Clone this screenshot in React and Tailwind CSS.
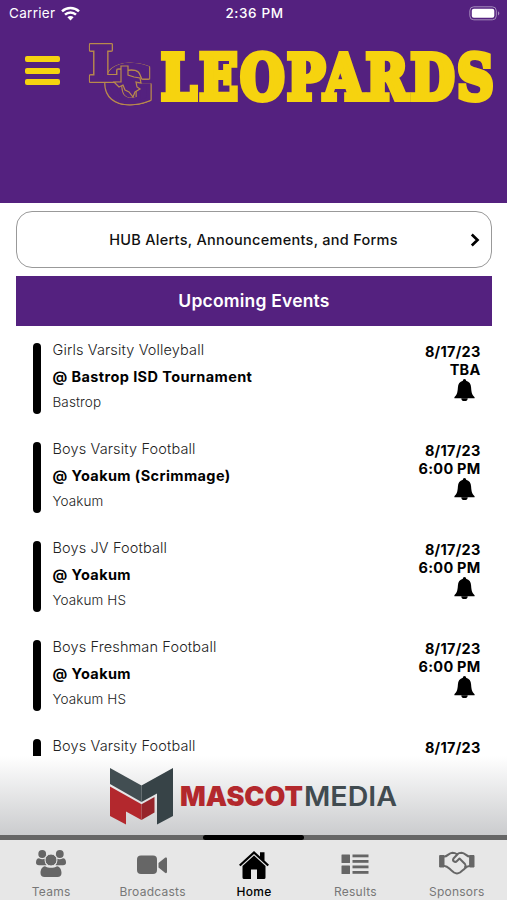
import React from 'react';

const events = [
  { id: 1, sport: 'Girls Varsity Volleyball', title: '@ Bastrop ISD Tournament', place: 'Bastrop', date: '8/17/23', time: 'TBA' },
  { id: 2, sport: 'Boys Varsity Football', title: '@ Yoakum (Scrimmage)', place: 'Yoakum', date: '8/17/23', time: '6:00 PM' },
  { id: 3, sport: 'Boys JV Football', title: '@ Yoakum', place: 'Yoakum HS', date: '8/17/23', time: '6:00 PM' },
  { id: 4, sport: 'Boys Freshman Football', title: '@ Yoakum', place: 'Yoakum HS', date: '8/17/23', time: '6:00 PM' },
  { id: 5, sport: 'Boys Varsity Football', date: '8/17/23' },
];

function StatusBar() {
  return (
    <div className="grid h-7 grid-cols-3 items-center pl-[9px] pr-[7px] text-[13.5px] leading-none text-white">
      <div className="flex items-center gap-[6px]">
        <span className="tracking-[0.3px]">Carrier</span>
        <svg className="-mt-[2px]" width="19" height="15" viewBox="0 0 19 15" fill="none" stroke="white" strokeWidth="2.5">
          <path d="M1 5.3c4.8-4.5 12.2-4.5 17 0" />
          <path d="M4 8.6c3.1-2.9 7.9-2.9 11 0" />
          <path d="M9.5 14.4l-3.1-3.2c1.8-1.6 4.4-1.6 6.2 0z" fill="white" stroke="none" />
        </svg>
      </div>
      <div className="whitespace-nowrap text-center font-medium tracking-[0.6px]">2:36 PM</div>
      <svg className="-mt-px justify-self-end" width="31" height="15" viewBox="0 0 31 15">
        <rect x="0.8" y="0.8" width="26.5" height="13" rx="4" fill="none" stroke="#a58dbc" strokeWidth="1" />
        <rect x="2.8" y="2.8" width="22.5" height="9" rx="2" fill="white" />
        <path d="M29 5.2c1.8.8 1.8 3.4 0 4.2z" fill="#a58dbc" />
      </svg>
    </div>
  );
}

function TeamLogo() {
  return (
    <svg className="ml-[27px] shrink-0 overflow-visible" width="406" height="70" viewBox="87 38 406 70">
      <g fontFamily="'DejaVu Serif'" fontWeight="bold" fill="#54217f" stroke="#54217f" strokeWidth="3.5">
        <g className="[filter:drop-shadow(1px_0_0_#b98a4c)_drop-shadow(-1px_0_0_#b98a4c)_drop-shadow(0_1px_0_#b98a4c)]">
          <text x="105" y="101.500" fontSize="50" textLength="48" lengthAdjust="spacingAndGlyphs">G</text>
        </g>
        <g className="[filter:drop-shadow(1px_0_0_#b98a4c)_drop-shadow(-1px_0_0_#b98a4c)_drop-shadow(0_1px_0_#b98a4c)_drop-shadow(0_-1px_0_#b98a4c)]">
          <text x="89.500" y="79.500" fontSize="47" textLength="34" lengthAdjust="spacingAndGlyphs">L</text>
        </g>
      </g>
      <path
        d="M121 66h7v9l6 2 6 1 1 5-5-1 1 5 3 2-5 3-2 5-4-5-4-2-2-5-4 2-5-5h7z"
        fill="#54217f"
        stroke="#b98a4c"
        strokeWidth="1.2"
      />
      <text
        x="161"
        y="99.200"
        textLength="335"
        lengthAdjust="spacingAndGlyphs"
        letterSpacing="3"
        fontFamily="'DejaVu Serif'"
        fontWeight="bold"
        fontSize="62"
        fill="#f6d30f"
        stroke="#f6d30f"
        strokeWidth="6"
      >
        LEOPARDS
      </text>
    </svg>
  );
}

function BellIcon() {
  return (
    <svg className="mr-[6px]" width="21" height="23" viewBox="0 0 21 23">
      <path d="M10.5 0c1 0 1.6.7 1.6 1.8 3.2.8 4.8 3.2 5 6.7.3 5.200 1 7.300 3.500 9.700v1H.4v-1c2.500-2.400 3.200-4.500 3.500-9.700.2-3.500 1.800-5.900 5-6.700C8.900.7 9.500 0 10.500 0z" />
      <path d="M7.300 19.200h6.400a3.200 2.900 0 0 1-6.400 0z" />
    </svg>
  );
}

function EventRow({ event }) {
  return (
    <div className="mb-7 flex h-[71px] shrink-0 pl-[16.5px] pr-[10.5px]">
      <div className="h-full w-2 rounded-full bg-black" />
      <div className="ml-[12px] flex-1 text-[#222]">
        <div className="-mt-[6px] text-[14.5px] font-light leading-[26px] tracking-[0.13px]">{event.sport}</div>
        <div className="mt-px text-[14.5px] font-bold leading-[26px] tracking-[0.4px] text-black">{event.title}</div>
        <div className="-mt-px text-[13.5px] font-light leading-[26px] tracking-[0.1px]">{event.place}</div>
      </div>
      <div className="flex flex-col items-end text-[14.5px] font-bold leading-[18px] tracking-[0.25px] text-black">
        <div>{event.date}</div>
        <div>{event.time}</div>
        {event.time && <BellIcon />}
      </div>
    </div>
  );
}

function SponsorBanner() {
  return (
    <div className="flex h-[79px] shrink-0 items-start bg-linear-to-b from-white to-[#cbccce] pl-[109px] pt-[12px]">
      <svg width="65" height="59" viewBox="0 0 65 59">
        <path d="M1 0l31.500 17.500V34L1 16z" fill="#424e52" />
        <path d="M32.500 17.500L64 0v48l-16 8.500V25.500L32.500 34z" fill="#374347" />
        <path d="M1 18.500l31.500 17.800V52L17 43.500V56.500L1 48z" fill="#b3282d" />
        <path d="M32.500 36.300L45.500 29v15.500L32.500 52z" fill="#97242a" />
      </svg>
      <svg width="230" height="40" viewBox="0 0 230 40" className="mt-[7px]">
        <text x="6" y="30.500" textLength="123" lengthAdjust="spacingAndGlyphs" fontFamily="Inter" fontSize="27.500" fontWeight="900" fill="#b3282d">MASCOT</text>
        <text x="130" y="30.500" textLength="93" lengthAdjust="spacingAndGlyphs" fontFamily="Inter" fontSize="27.500" fontWeight="600" fill="#414b50">MEDIA</text>
      </svg>
    </div>
  );
}

function TeamsIcon() {
  return (
    <svg className="-mt-px" width="30" height="28" viewBox="0 0 30 28" fill="currentColor">
      <circle cx="6.200" cy="4" r="3.900" />
      <circle cx="23.800" cy="4" r="3.900" />
      <path d="M3 8.300c2 1.300 4.600 1.300 6.500.2-1 2.800-.6 4.800 1 6.800H3c-2 0-3-1-3-2.800 0-2.200 1-4.200 3-4.200zM27 8.300c-2 1.300-4.600 1.300-6.500.2 1 2.800.6 4.800-1 6.800H27c2 0 3-1 3-2.800 0-2.200-1-4.200-3-4.200z" />
      <circle cx="15" cy="10" r="6" stroke="#e7e7e7" strokeWidth="1" />
      <path d="M9 16.200c3.500 2.200 8.500 2.200 12 0 3 .5 4.500 3.500 4.500 6.800 0 2.500-1.500 4-4 4h-13c-2.500 0-4-1.500-4-4 0-3.300 1.500-6.300 4.500-6.800z" />
    </svg>
  );
}

function BroadcastsIcon() {
  return (
    <svg width="31" height="28" viewBox="0 0 31 28" fill="currentColor">
      <rect x="0" y="5.500" width="20" height="18.500" rx="4" />
      <path d="M21.500 13l6.500-5.200c1-.8 2-.3 2 1v13c0 1.300-1 1.700-2 1l-6.500-5.300z" />
    </svg>
  );
}

function HomeIcon() {
  return (
    <svg className="mt-[2px]" width="30" height="28" viewBox="0 0 30 28" fill="currentColor">
      <path d="M15 0l6 5.500V1.200h4.500v8.300L30 13.800l-1.500 1.500L15 2.900 1.500 15.300 0 13.800z" />
      <path d="M15 4.500l11.500 10.600V26.500a1.500 1.500 0 0 1-1.500 1.500h-7v-9.500h-6V28H5a1.500 1.500 0 0 1-1.500-1.500V15.100z" />
    </svg>
  );
}

function ResultsIcon() {
  return (
    <svg width="28" height="28" viewBox="0 0 28 28" fill="currentColor">
      <rect x="0.500" y="4.500" width="8.500" height="8.500" rx="0.500" />
      <rect x="11.500" y="4.500" width="16" height="2.800" />
      <rect x="11.500" y="10" width="16" height="2.800" />
      <rect x="0.500" y="15.500" width="8.500" height="8.500" rx="0.500" />
      <rect x="11.500" y="15.500" width="16" height="2.800" />
      <rect x="11.500" y="21" width="16" height="2.800" />
    </svg>
  );
}

function SponsorsIcon() {
  return (
    <svg width="36" height="28" viewBox="0 0 36 28" fill="none" stroke="currentColor" strokeWidth="2" strokeLinejoin="round" strokeLinecap="round">
      <path d="M1 5.500h4v11.500H1zM31 5.500h4v11.500h-4z" fill="currentColor" strokeWidth="1" />
      <path d="M5.500 6.500c3 0 4-3.500 8-3.700 2 0 3.500.7 4.500 1.400 1-.7 2.500-1.400 4.500-1.400 4 .2 5 3.700 8 3.700" />
      <path d="M5.500 16c3 0 4.500 2.500 7 4.500l2.500 2c2 1.300 4 1.300 6 0l3-2.500c2.500-2 3.500-4 6.500-4" />
      <path d="M18.500 4.200l-4 4.300c-1.500 2.500 1.500 4.500 3.500 2.500l2.500-2.500 5.500 5.500c.8 1 .8 2 0 3" />
    </svg>
  );
}

const tabs = [
  { name: 'Teams', icon: <TeamsIcon /> },
  { name: 'Broadcasts', icon: <BroadcastsIcon /> },
  { name: 'Home', icon: <HomeIcon />, active: true },
  { name: 'Results', icon: <ResultsIcon /> },
  { name: 'Sponsors', icon: <SponsorsIcon /> },
];

function TabBar() {
  return (
    <div className="grid h-[65px] shrink-0 grid-cols-5 bg-[#e7e7e7]">
      {tabs.map((tab) => (
        <div key={tab.name} className={`flex flex-col items-center ${tab.active ? 'text-black' : 'text-[#666]'}`}>
          <div className="h-[5px] w-full bg-[#666]">
            {tab.active && <div className="h-full w-full rounded-full bg-black" />}
          </div>
          <div className="ml-px mt-[9px] flex h-[30px] items-center justify-center">{tab.icon}</div>
          <div className={`mt-[5px] pl-px text-[12px] leading-4 tracking-[0.25px] ${tab.active ? 'font-medium' : 'text-[#777]'}`}>{tab.name}</div>
        </div>
      ))}
    </div>
  );
}

export default function App() {
  return (
    <div className="flex h-[900px] w-[507px] flex-col overflow-hidden bg-white font-['Inter',sans-serif]">
      <header className="h-[203px] shrink-0 bg-[#54217f]">
        <StatusBar />
        <div className="flex pl-[25px] pt-[10px]">
          <button className="mt-[18px] flex h-[29px] w-[35px] shrink-0 flex-col justify-between">
            <span className="h-[6px] w-full rounded-[2px] bg-[#f6d30f]" />
            <span className="h-[6px] w-full rounded-[2px] bg-[#f6d30f]" />
            <span className="h-[6px] w-full rounded-[2px] bg-[#f6d30f]" />
          </button>
          <TeamLogo />
        </div>
      </header>

      <main className="flex min-h-0 flex-1 flex-col overflow-hidden px-4 pt-2">
        <button className="flex h-[57px] w-[476px] shrink-0 items-center rounded-[16px] border border-[#999] pl-[11px] pr-[11px] text-[14.5px] font-medium tracking-[0.28px] text-[#111]">
          <span className="flex-1 pl-[9px] text-center">HUB Alerts, Announcements, and Forms</span>
          <svg width="10" height="14" viewBox="0 0 10 14" fill="none" stroke="black" strokeWidth="2.700">
            <path d="M1.800 1.500L7.500 7l-5.700 5.500" />
          </svg>
        </button>
        <div className="mb-[17px] mt-[8px] flex h-[50px] w-[476px] shrink-0 items-center justify-center bg-[#54217f] text-[17.5px] font-semibold tracking-[0.2px] text-white">
          Upcoming Events
        </div>
        {events.map((event) => (
          <EventRow key={event.id} event={event} />
        ))}
      </main>

      <SponsorBanner />
      <TabBar />
    </div>
  );
}
